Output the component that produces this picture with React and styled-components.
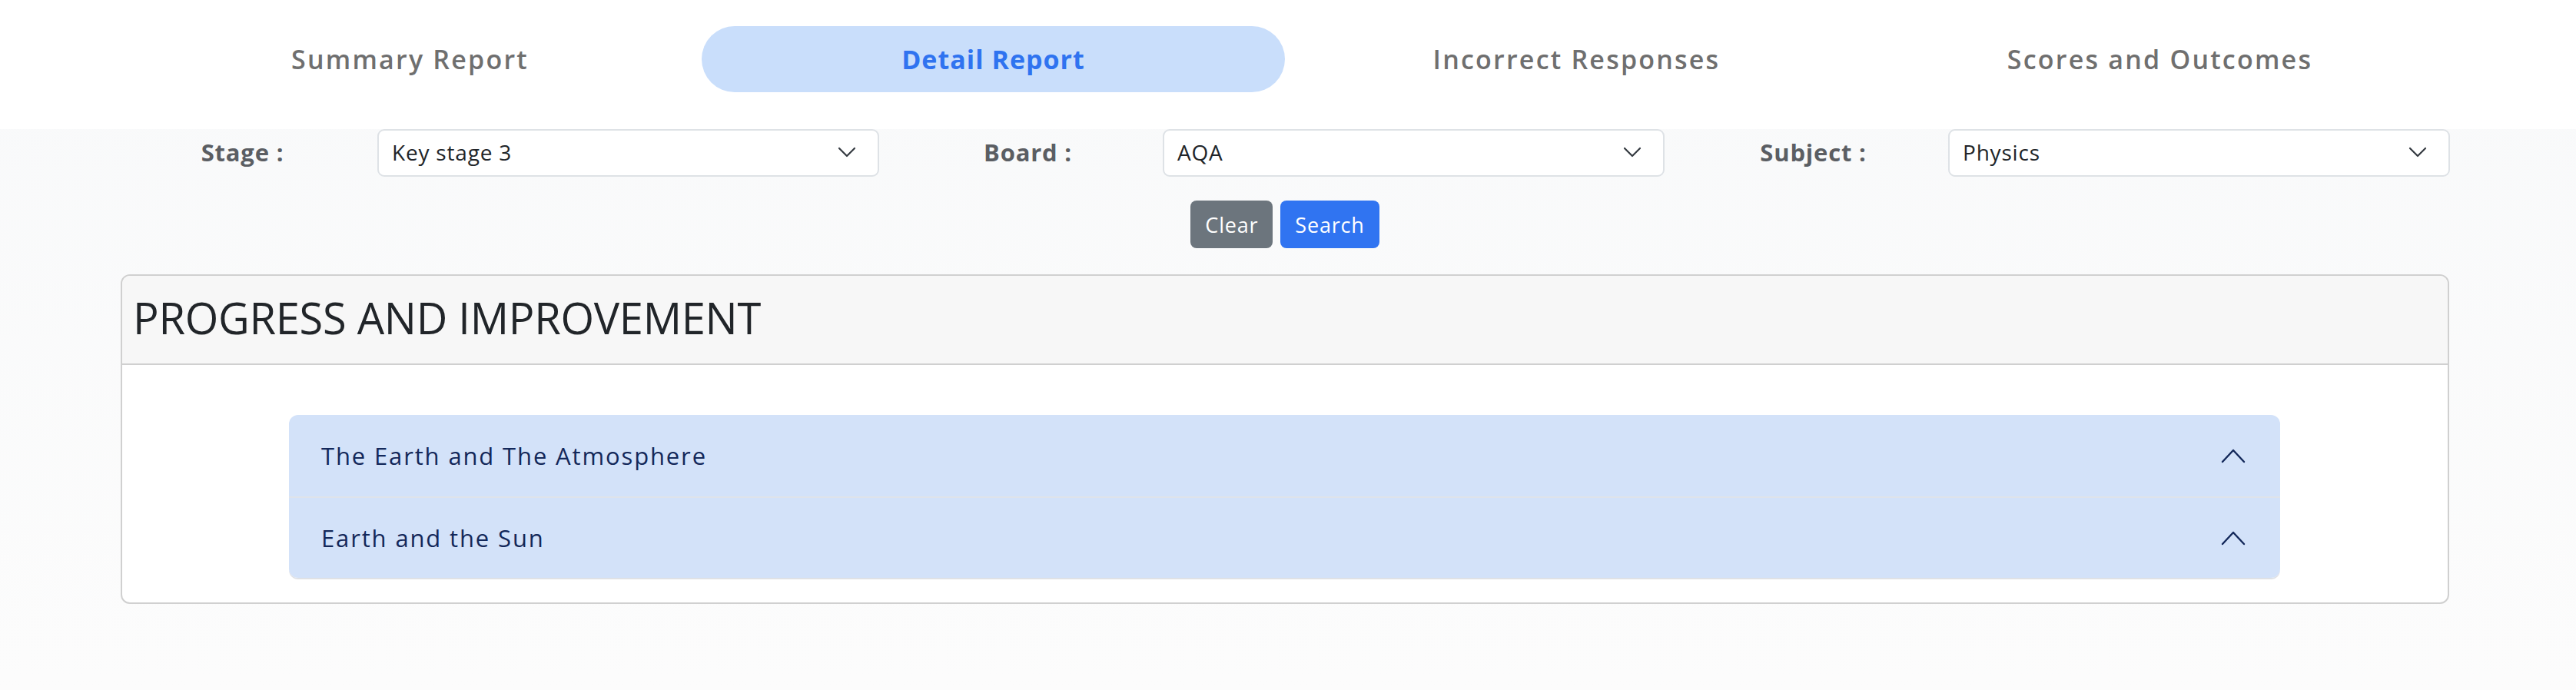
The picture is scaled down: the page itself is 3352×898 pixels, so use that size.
import React from "react";
import styled, { createGlobalStyle } from "styled-components";

const GlobalStyle = createGlobalStyle`
  html, body {
    margin: 0;
    padding: 0;
  }
  body {
    font-family: "Open Sans", "Liberation Sans", sans-serif;
    background: #f9fafa;
    color: #212529;
  }
`;

const tabs = ["Summary Report", "Detail Report", "Incorrect Responses", "Scores and Outcomes"];

const filters = [
  { label: "Stage :", value: "Key stage 3" },
  { label: "Board :", value: "AQA" },
  { label: "Subject :", value: "Physics" }
];

const topics = ["The Earth and The Atmosphere", "Earth and the Sun"];

const ChevronDown = () => (
  <svg width="24" height="14" viewBox="0 0 24 14" fill="none">
    <path d="M2 2l10 10L22 2" stroke="#343a40" strokeWidth="2.2" strokeLinecap="round" strokeLinejoin="round" />
  </svg>
);

const ChevronUp = () => (
  <svg width="32" height="20" viewBox="0 0 32 20" fill="none">
    <path d="M2 18L16 3l14 15" stroke="#13285a" strokeWidth="2.4" strokeLinecap="round" strokeLinejoin="round" />
  </svg>
);

export default function App() {
  return (
    <Page>
      <GlobalStyle />
      <TabBar>
        <TabRow>
          {tabs.map((t, i) => (
            <Tab key={t} $active={i === 1}>
              {t}
            </Tab>
          ))}
        </TabRow>
      </TabBar>

      <FilterRow>
        {filters.map(f => (
          <FilterGroup key={f.label}>
            <FilterLabel>{f.label}</FilterLabel>
            <SelectBox>
              <span>{f.value}</span>
              <ChevronDown />
            </SelectBox>
          </FilterGroup>
        ))}
      </FilterRow>

      <Buttons>
        <Button $color="#6c757d">Clear</Button>
        <Button $color="#3074f1">Search</Button>
      </Buttons>

      <Card>
        <CardHeader>PROGRESS AND IMPROVEMENT</CardHeader>
        <CardBody>
          <Accordion>
            {topics.map(t => (
              <AccordionItem key={t}>
                <span>{t}</span>
                <ChevronUp />
              </AccordionItem>
            ))}
          </Accordion>
        </CardBody>
      </Card>
    </Page>
  );
}

const Page = styled.div`
  min-height: 898px;
  background: linear-gradient(#f8f9fa, #fcfcfc);
  letter-spacing: 0.05em;
`;

const TabBar = styled.div`
  background: #fff;
  height: 168px;
  padding-top: 34px;
  box-sizing: border-box;
`;

const TabRow = styled.div`
  display: grid;
  grid-template-columns: repeat(4, 759px);
  margin-left: 154px;
`;

const Tab = styled.div`
  height: 86px;
  display: flex;
  align-items: center;
  justify-content: center;
  border-radius: 43px;
  font-size: 34px;
  letter-spacing: ${p => (p.$active ? "0.03em" : "0.065em")};
  font-weight: ${p => (p.$active ? 700 : 600)};
  color: ${p => (p.$active ? "#2f73f0" : "#6f6f6f")};
  background: ${p => (p.$active ? "#c9defb" : "transparent")};
`;

const FilterRow = styled.div`
  display: flex;
  margin-left: 122px;
  width: 3066px;
`;

const FilterGroup = styled.div`
  width: 1022px;
  display: flex;
  align-items: center;
`;

const FilterLabel = styled.div`
  width: 351px;
  padding-left: 18px;
  padding-bottom: 2px;
  text-align: center;
  font-size: 31px;
  font-weight: 700;
  color: #5b5e63;
`;

const SelectBox = styled.div`
  width: 653px;
  height: 62px;
  box-sizing: border-box;
  background: #fff;
  border: 2px solid #dee2e6;
  border-radius: 9px;
  display: flex;
  align-items: center;
  justify-content: space-between;
  padding: 0 28px 2px 17px;
  font-size: 28px;
  color: #212529;
`;

const Buttons = styled.div`
  display: flex;
  justify-content: center;
  gap: 10px;
  margin: 31px 0 0 -8px;
`;

const Button = styled.button`
  height: 62px;
  padding: 0 19px;
  border: none;
  border-radius: 8px;
  background: ${p => p.$color};
  color: #fff;
  font-family: inherit;
  letter-spacing: inherit;
  font-size: 27px;
`;

const Card = styled.div`
  margin: 34px 0 0 157px;
  width: 3030px;
  box-sizing: border-box;
  border: 2px solid #d0d0d0;
  border-radius: 12px;
  background: #fff;
  overflow: hidden;
`;

const CardHeader = styled.div`
  height: 116px;
  box-sizing: border-box;
  padding: 0 0 6px 14px;
  background: #f7f7f7;
  border-bottom: 2px solid #d0d0d0;
  display: flex;
  align-items: center;
  font-size: 56px;
  font-weight: 400;
  letter-spacing: -0.005em;
  color: #212529;
`;

const CardBody = styled.div`
  padding: 65px 0 32px;
`;

const Accordion = styled.div`
  width: 2591px;
  margin-left: 217px;
  border-radius: 12px;
  overflow: hidden;
  box-shadow: 0 2px 0 #dfe1e5;
`;

const AccordionItem = styled.div`
  height: 106px;
  box-sizing: border-box;
  background: #d3e2f9;
  display: flex;
  align-items: center;
  justify-content: space-between;
  padding: 0 45px 0 42px;
  font-size: 31px;
  letter-spacing: 0.06em;
  color: #13285a;

  & + & {
    border-top: 2px solid #dfe3ea;
  }
`;
